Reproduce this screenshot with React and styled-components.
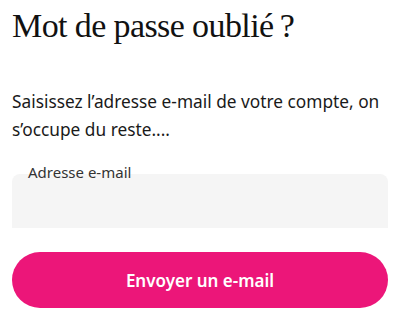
import React from 'react'
import styled, { createGlobalStyle } from 'styled-components'

const Global = createGlobalStyle`
  body {
    margin: 0;
    background: #fff;
    font-family: "Noto Sans", Arial, sans-serif;
  }
`

const Page = styled.main`
  padding: 4px 12px 0 12px;
  width: 376px;
`

const Title = styled.h1`
  margin: 0;
  font-family: "Liberation Serif", "Times New Roman", serif;
  font-weight: 400;
  font-size: 34px;
  line-height: 44px;
  color: #111;
  letter-spacing: -0.6px;
`

const Intro = styled.p`
  margin: 40px 0 0 0;
  font-size: 17.3px;
  line-height: 28px;
  color: #1a1a1a;
`

const Field = styled.div`
  position: relative;
  margin-top: 30px;
  height: 54px;
  background: #f5f5f5;
  border-radius: 8px 8px 0 0;
`

const Label = styled.label`
  position: absolute;
  left: 16px;
  top: -10px;
  font-size: 15px;
  line-height: 16px;
  color: #333;
`

const Input = styled.input`
  width: 100%;
  height: 100%;
  box-sizing: border-box;
  border: none;
  background: transparent;
  padding: 14px 16px 0;
  font: inherit;
  outline: none;
`

const Button = styled.button`
  display: block;
  width: 100%;
  margin-top: 24px;
  height: 56px;
  border: none;
  border-radius: 28px;
  background: #ec1679;
  color: #fff;
  font-family: inherit;
  font-weight: 600;
  font-size: 17px;
  cursor: pointer;
`

const App = () => {
    return (
        <Page>
            <Global/>
            <Title>Mot de passe oublié{'\u202F'}?</Title>
            <Intro>
                Saisissez l’adresse e-mail de votre compte, on s’occupe du reste....
            </Intro>
            <Field>
                <Label htmlFor='email'>Adresse e-mail</Label>
                <Input id='email' type='email'/>
            </Field>
            <Button>Envoyer un e-mail</Button>
        </Page>
    )
}

export default App
